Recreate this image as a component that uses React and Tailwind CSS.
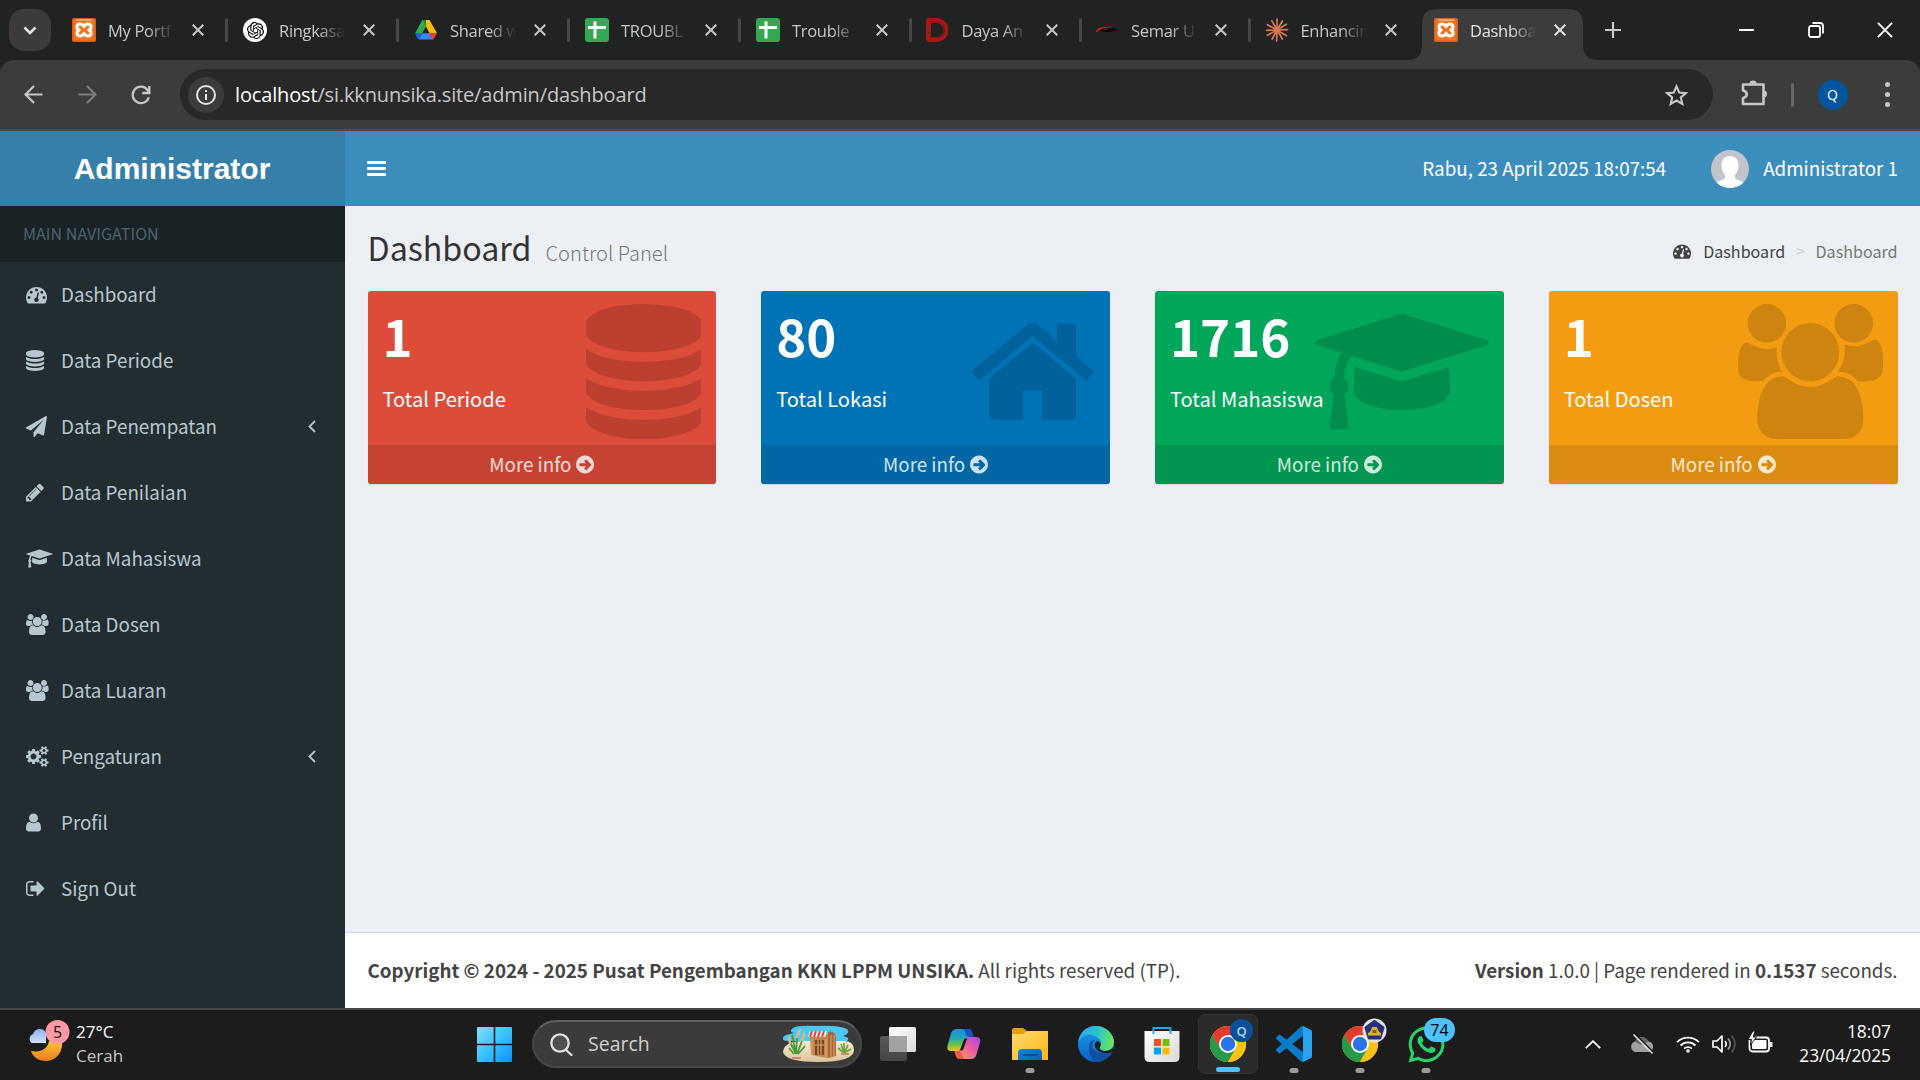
import React from "react";
import { SiOpenai } from "react-icons/si";
import { FaWhatsapp } from "react-icons/fa";

/* Font Awesome 4 outlines: [viewBox x, width, path] on a 1792-unit em */
const FA = {
  dashboard: [0, 1792, "M384 1152q0-53-37.5-90.5t-90.5-37.5-90.5 37.5-37.5 90.5 37.5 90.5 90.5 37.5 90.5-37.5 37.5-90.5zm192-448q0-53-37.5-90.5t-90.5-37.5-90.5 37.5-37.5 90.5 37.5 90.5 90.5 37.5 90.5-37.5 37.5-90.5zm428 481l101-382q6-26-7.5-48.5t-38.5-29.5-48 6.5-30 39.5l-101 382q-60 5-107 43.5t-63 98.5q-20 77 20 146t117 89 146-20 89-117q16-60-6-117t-72-91zm660-33q0-53-37.5-90.5t-90.5-37.5-90.5 37.5-37.5 90.5 37.5 90.5 90.5 37.5 90.5-37.5 37.5-90.5zm-640-640q0-53-37.5-90.5t-90.5-37.5-90.5 37.5-37.5 90.5 37.5 90.5 90.5 37.5 90.5-37.5 37.5-90.5zm448 192q0-53-37.5-90.5t-90.5-37.5-90.5 37.5-37.5 90.5 37.5 90.5 90.5 37.5 90.5-37.5 37.5-90.5zm320 448q0 261-141 483-19 29-54 29h-1402q-35 0-54-29-141-221-141-483 0-182 71-348t191-286 286-191 348-71 348 71 286 191 191 286 71 348z"],
  database: [128, 1536, "M896 768q237 0 443-43t325-127v170q0 69-103 128t-280 93.5-385 34.5-385-34.5-280-93.5-103-128v-170q119 84 325 127t443 43zm0 768q237 0 443-43t325-127v170q0 69-103 128t-280 93.5-385 34.5-385-34.5-280-93.5-103-128v-170q119 84 325 127t443 43zm0-384q237 0 443-43t325-127v170q0 69-103 128t-280 93.5-385 34.5-385-34.5-280-93.5-103-128v-170q119 84 325 127t443 43zm0-1152q208 0 385 34.5t280 93.5 103 128v128q0 69-103 128t-280 93.5-385 34.5-385-34.5-280-93.5-103-128v-128q0-69 103-128t280-93.5 385-34.5z"],
  send: [0, 1792, "M1764 11q33 24 27 64l-256 1536q-5 29-32 45-14 8-31 8-11 0-24-5l-453-185-242 295q-18 23-49 23-13 0-22-4-19-7-30.5-23.5t-11.5-36.5v-349l864-1059-1069 925-395-162q-37-14-40-55-2-40 32-59l1664-960q15-9 32-9 20 0 36 11z"],
  pencil: [128, 1536, "M491 1536l91-91-235-235-91 91v107h128v128h107zm523-928q0-22-22-22-10 0-17 7l-542 542q-7 7-7 17 0 22 22 22 10 0 17-7l542-542q7-7 7-17zm-54-192l416 416-832 832h-416v-416zm683 96q0 53-37 90l-166 166-416-416 166-165q36-38 90-38 53 0 91 38l235 234q37 39 37 91z"],
  cap: [0, 2304, "M1774 836l18 316q4 69-82 128t-235 93.5-323 34.5-323-34.5-235-93.5-82-128l18-316 574 181q22 7 48 7t48-7zm530-324q0 23-22 31l-1120 352q-4 1-10 1t-10-1l-652-206q-43 34-71 111.5t-34 178.5q63 36 63 109 0 69-58 107l58 433q2 14-8 25-9 11-24 11h-192q-15 0-24-11-10-11-8-25l58-433q-58-38-58-107 0-73 65-111 11-207 98-330l-333-104q-22-8-22-31t22-31l1120-352q4-1 10-1t10 1l1120 352q22 8 22 31z"],
  users: [-64, 1920, "M529 896q-162 5-265 128h-134q-82 0-138-40.5t-56-118.5q0-353 124-353 6 0 43.5 21t97.5 42.5 119 21.5q67 0 133-23-5 37-5 66 0 159 93 293zm1071 637q0 120-73 189.5t-194 69.5h-874q-121 0-194-69.5t-73-189.5q0-53 3.5-103.5t14-109 26.5-108.5 43-97.5 62-81 85.5-53.5 111.5-20q10 0 43 21.5t73 48 107 48 135 21.5 135-21.5 107-48 73-48 43-21.5q61 0 111.5 20t85.5 53.5 62 81 43 97.5 26.5 108.5 14 109 3.5 103.5zm-1024-1277q0 106-75 181t-181 75-181-75-75-181 75-181 181-75 181 75 75 181zm704 384q0 159-112.5 271.5t-271.5 112.5-271.5-112.5-112.5-271.5 112.5-271.5 271.5-112.5 271.5 112.5 112.5 271.5zm576 225q0 78-56 118.5t-138 40.5h-134q-103-123-265-128 93-134 93-293 0-29-5-66 66 23 133 23 59 0 119-21.5t97.5-42.5 43.5-21q124 0 124 353zm-128-609q0 106-75 181t-181 75-181-75-75-181 75-181 181-75 181 75 75 181z"],
  cogs: [-64, 1920, "M832 896q0-106-75-181t-181-75-181 75-75 181 75 181 181 75 181-75 75-181zm768 512q0-52-38-90t-90-38-90 38-38 90q0 53 37.5 90.5t90.5 37.5 90.5-37.5 37.5-90.5zm0-1024q0-52-38-90t-90-38-90 38-38 90q0 53 37.5 90.5t90.5 37.5 90.5-37.5 37.5-90.5zm-384 421v185q0 10-7 19.5t-16 10.5l-155 24q-11 35-32 76 34 48 90 115 7 11 7 20 0 12-7 19-23 30-82.5 89.5t-78.5 59.5q-11 0-21-7l-115-90q-37 19-77 31-11 108-23 155-7 24-30 24h-186q-11 0-20-7.5t-10-17.5l-23-153q-34-10-75-31l-118 89q-7 7-20 7-11 0-21-8-144-133-144-160 0-9 7-19 10-14 41-53t47-61q-23-44-35-82l-152-24q-10-1-17-9.5t-7-19.5v-185q0-10 7-19.5t16-10.5l155-24q11-35 32-76-34-48-90-115-7-11-7-20 0-12 7-20 22-30 82-89t79-59q11 0 21 7l115 90q34-18 77-32 11-108 23-154 7-24 30-24h186q11 0 20 7.5t10 17.5l23 153q34 10 75 31l118-89q8-7 20-7 11 0 21 8 144 133 144 160 0 8-7 19-12 16-42 54t-45 60q23 48 34 82l152 23q10 2 17 10.5t7 19.5zm640 533v140q0 16-149 31-12 27-30 52 51 113 51 138 0 4-4 7-122 71-124 71-8 0-46-47t-52-68q-20 2-30 2t-30-2q-14 21-52 68t-46 47q-2 0-124-71-4-3-4-7 0-25 51-138-18-25-30-52-149-15-149-31v-140q0-16 149-31 13-29 30-52-51-113-51-138 0-4 4-7 4-2 35-20t59-34 30-16q8 0 46 46.5t52 67.5q20-2 30-2t30 2q51-71 92-112l6-2q4 0 124 70 4 3 4 7 0 25-51 138 17 23 30 52 149 15 149 31zm0-1024v140q0 16-149 31-12 27-30 52 51 113 51 138 0 4-4 7-122 71-124 71-8 0-46-47t-52-68q-20 2-30 2t-30-2q-14 21-52 68t-46 47q-2 0-124-71-4-3-4-7 0-25 51-138-18-25-30-52-149-15-149-31v-140q0-16 149-31 13-29 30-52-51-113-51-138 0-4 4-7 4-2 35-20t59-34 30-16q8 0 46 46.5t52 67.5q20-2 30-2t30 2q51-71 92-112l6-2q4 0 124 70 4 3 4 7 0 25-51 138 17 23 30 52 149 15 149 31z"],
  user: [256, 1280, "M1536 1399q0 109-62.5 187t-150.5 78h-854q-88 0-150.5-78t-62.5-187q0-85 8.5-160.5t31.5-152 58.5-131 94-89 134.5-34.5q131 128 313 128t313-128q76 0 134.5 34.5t94 89 58.5 131 31.5 152 8.5 160.5zm-256-887q0 159-112.5 271.5t-271.5 112.5-271.5-112.5-112.5-271.5 112.5-271.5 271.5-112.5 271.5 112.5 112.5 271.5z"],
  signout: [64, 1664, "M704 1440q0 4 1 20t.5 26.5-3 23.5-10 19.5-20.5 6.5h-320q-119 0-203.5-84.5t-84.5-203.5v-704q0-119 84.5-203.5t203.5-84.5h320q13 0 22.5 9.5t9.5 22.5q0 4 1 20t.5 26.5-3 23.5-10 19.5-20.5 6.5h-320q-66 0-113 47t-47 113v704q0 66 47 113t113 47h312l11.5 1 11.5 3 8 5.5 7 9 2 13.5zm928-544q0 26-19 45l-544 544q-19 19-45 19t-45-19-19-45v-288h-448q-26 0-45-19t-19-45v-384q0-26 19-45t45-19h448v-288q0-26 19-45t45-19 45 19l544 544q19 19 19 45z"],
  home: [64, 1664, "M1472 992v480q0 26-19 45t-45 19h-384v-384h-256v384h-384q-26 0-45-19t-19-45v-480q0-1 .5-3t.5-3l575-474 575 474q1 2 1 6zm223-69l-62 74q-8 9-21 11h-3q-13 0-21-7l-692-577-692 577q-12 8-24 7-13-2-21-11l-62-74q-8-10-7-23.5t11-21.5l719-599q32-26 76-26t76 26l244 204v-195q0-14 9-23t23-9h192q14 0 23 9t9 23v408l219 182q10 8 11 21.5t-7 23.5z"],
  arrow: [128, 1536, "M1413 896q0-27-18-45l-91-91-271-271q-18-18-45-18t-45 18l-91 91q-18 18-18 45t18 45l126 126h-502q-26 0-45 19t-19 45v128q0 26 19 45t45 19h502l-126 126q-18 18-18 45t18 45l91 91q18 18 45 18t45-18l271-271 91-91q18-18 18-45zm251 0q0 209-103 385.5t-279.5 279.5-385.5 103-385.5-103-279.5-279.5-103-385.5 103-385.5 279.5-279.5 385.5-103 385.5 103 279.5 279.5 103 385.5z"],
};

function Fa({ name, size = 21, className = "" }) {
  const [x, w, d] = FA[name];
  return (
    <svg viewBox={`${x} 0 ${w} 1792`} width={(w * size) / 1792} height={size} className={"shrink-0 " + className} fill="currentColor">
      <path d={d} />
    </svg>
  );
}

const Xampp = () => (
  <svg viewBox="0 0 24 24" className="h-6 w-6" fill="none">
    <rect width="24" height="24" rx="2.500" fill="#f37321" />
    <rect x=".75" y=".75" width="22.500" height="22.500" rx="2" stroke="#d9601a" strokeWidth="1.500" />
    <path d="M4 2h16" stroke="#ffc69b" strokeWidth="1.200" />
    <path d="M12 8.800C10.500 5 5 5.200 5 9c0 1.500.8 2.500 2.200 3C5.800 12.500 5 13.500 5 15c0 3.800 5.500 4 7 .2 1.500 3.800 7 3.600 7-.2 0-1.500-.8-2.500-2.200-3 1.400-.5 2.200-1.500 2.200-3 0-3.800-5.500-4-7-.2Z" stroke="#fff" strokeWidth="3" strokeLinejoin="round" />
  </svg>
);
const Gpt = () => (
  <span className="grid h-6 w-6 place-items-center rounded-full bg-white text-black">
    <SiOpenai size={17} />
  </span>
);
const Drive = () => (
  <svg viewBox="0 0 24 24" className="h-6 w-6">
    <path d="M8.200 2h7.600L12 8.600 5.600 19.600 1.200 15.200Z" fill="#34a853" />
    <path d="M8.500 2h7L23 15.200h-7.400Z" fill="#fbbc04" />
    <path d="M8.500 2h3.500v6.400Z" fill="#188038" />
    <path d="M1 15.200h7.500L5 21.500q-1 0-1.500-1Z" fill="#1967d2" />
    <path d="M8.300 15.200h7.400L19 21.600H5Z" fill="#4285f4" />
    <path d="M15.500 15.200H23l-3 5.300q-.5 1-1.500 1Z" fill="#ea4335" />
  </svg>
);
const Sheets = () => (
  <svg viewBox="0 0 24 24" className="h-6 w-6">
    <rect width="24" height="24" rx="3" fill="#34a853" />
    <path d="M10 3.500v17M3 9.500h18" stroke="#fff" strokeWidth="3" />
  </svg>
);
const Daya = () => (
  <svg viewBox="0 0 24 24" className="h-6 w-6">
    <path d="M2.500 2.500h8a9.500 9.500 0 0 1 0 19h-8Z" fill="none" stroke="#9e1b16" strokeWidth="5" strokeLinejoin="round" />
    <path d="M3.500 4h7a8 8 0 0 1 0 16" fill="none" stroke="#7e1210" strokeWidth="1" />
  </svg>
);
const Semar = () => (
  <svg viewBox="0 0 24 24" className="h-6 w-6">
    <path d="M1 13.500C2 9 10 8 18 9.800 11 9.500 5 10.500 2.500 14Z" fill="#c8201c" />
    <path d="M4 13c4-3 13-4 20-1-5 0-8 2-12 2-3 0-5-1-8-1Z" fill="#050505" />
    <path d="M9 11.500h4" stroke="#50302f" strokeWidth=".8" />
  </svg>
);
const Claude = () => (
  <svg viewBox="-12 -12 24 24" className="h-6 w-6" stroke="#d97757" strokeWidth="1.700" strokeLinecap="round">
    {[0, 31, 58, 88, 121, 149, 182, 208, 241, 268, 299, 331].map((a, i) => (
      <path key={a} d={i % 2 ? "M0 0V-10.500" : "M0 0V-11"} transform={`rotate(${a})`} />
    ))}
    <circle r="3" fill="#d97757" stroke="none" />
  </svg>
);

const tabs = [
  ["My Portf", Xampp], ["Ringkasa", Gpt], ["Shared w", Drive], ["TROUBL", Sheets], ["Trouble", Sheets],
  ["Daya An", Daya], ["Semar U", Semar], ["Enhancin", Claude], ["Dashboa", Xampp],
];

const Cross = ({ s = 12, w = 2 }) => (
  <svg width={s} height={s} viewBox="0 0 12 12" fill="none" stroke="currentColor" strokeWidth={w}>
    <path d="M.7.7l10.600 10.600M11.300.7.7 11.300" />
  </svg>
);

function TabStrip() {
  return (
    <div className="flex h-[60px] items-center bg-[#202322] text-[#c7c7c7]">
      <div className="ml-[9px] mr-[9px] grid h-[42px] w-[42px] place-items-center rounded-[15px] bg-[#3b3b3b]">
        <svg width="14" height="9" viewBox="0 0 14 9" fill="none" stroke="#e3e3e3" strokeWidth="2.500"><path d="M1.500 1.500 7 7l5.500-5.500" /></svg>
      </div>
      {tabs.map(([t, Icon], i) => {
        const on = i === 8;
        return (
          <div key={i} className={"relative flex h-[60px] items-center " + (i < 4 ? "w-[171px]" : "w-[169.500px]")}>
            {on && (
              <svg className="absolute -left-[15px] top-[9px]" width="191" height="51" viewBox="0 0 191 51" fill="#3c3c3c">
                <path d="M0 51Q15 51 15 36V15Q15 0 30 0H161Q176 0 176 15V36Q176 51 191 51Z" />
              </svg>
            )}
            <div className="relative ml-3 flex items-center">
              <Icon />
              <span className={"ml-3 w-[72px] whitespace-nowrap pt-[2px] font-['Open_Sans',sans-serif] text-[16.500px] leading-6 tracking-[-0.300px] [mask-image:linear-gradient(to_right,#000_55%,transparent_92%)] " + (on ? "text-[#e3e3e3]" : "")}>{t}</span>
              <span className={"ml-[12px] " + (on ? "text-[#e3e3e3]" : "")}><Cross /></span>
              {i < 7 && <span className="ml-[21px] h-6 w-[3px] rounded-full bg-[#464847]" />}
            </div>
          </div>
        );
      })}
      <svg className="ml-[13px]" width="16" height="16" viewBox="0 0 16 16" stroke="#c7c7c7" strokeWidth="2.200"><path d="M8 0v16M0 8h16" /></svg>
      <div className="ml-auto flex text-white">
        <span className="grid h-[60px] w-[69px] place-items-center"><i className="h-[2px] w-[15px] bg-white" /></span>
        <span className="grid h-[60px] w-[69px] place-items-center">
          <svg width="16" height="16" viewBox="0 0 16 16" fill="none" stroke="#fff" strokeWidth="1.800"><rect x="1" y="4" width="11" height="11" rx="2" /><path d="M4.500 1H12q3 0 3 3v7.500" /></svg>
        </span>
        <span className="grid h-[60px] w-[70px] place-items-center"><Cross s={16} w={1.400} /></span>
      </div>
    </div>
  );
}

function Toolbar() {
  return (
    <div className="bg-[#202322]">
      <div className="flex h-[71px] items-center rounded-t-[14px] border-b-2 border-[#484b4a] bg-[#3c3c3c] text-[#c7c7c7]">
        <svg className="ml-6" width="19" height="19" viewBox="0 0 19 19" fill="none" stroke="currentColor" strokeWidth="2.200"><path d="M18.500 9.500H2M10 1 1.500 9.500 10 18" /></svg>
        <svg className="ml-[35px] text-[#7d7d7d]" width="19" height="19" viewBox="0 0 19 19" fill="none" stroke="currentColor" strokeWidth="2.200"><path d="M.5 9.500H17M9 1l8.500 8.500L9 18" /></svg>
        <svg className="ml-[34px]" width="20" height="20" viewBox="0 0 20 20" fill="none" stroke="currentColor" strokeWidth="2.300"><path d="M17.800 12.200A8.200 8.200 0 1 1 16.500 5l1.800 2.500M18.300 1v7h-7" /></svg>
        <div className="ml-[29px] flex h-[51px] w-[1533px] items-center rounded-full bg-[#282828]">
          <span className="ml-[8px] grid h-9 w-9 place-items-center rounded-full bg-[#3c3c3c]">
            <svg width="20" height="20" viewBox="0 0 20 20" fill="none" stroke="#e3e3e3" strokeWidth="2"><circle cx="10" cy="10" r="9" /><path d="M10 9v6M10 5v2" /></svg>
          </span>
          <span className="ml-[11px] whitespace-nowrap font-['Open_Sans',sans-serif] text-[20px] tracking-[-0.150px] text-[#c7c7c7]"><span className="text-white">localhost</span>/si.kknunsika.site/admin/dashboard</span>
          <svg className="ml-auto mr-[25px]" width="23" height="22" viewBox="0 0 24 23" fill="none" stroke="currentColor" strokeWidth="2.200"><path d="m12 2.500 2.800 6.400 7 .6-5.300 4.600 1.600 6.800-6.100-3.600-6.100 3.600 1.600-6.800-5.300-4.600 7-.6Z" /></svg>
        </div>
        <svg className="-mt-1 ml-[28px]" width="26" height="26" viewBox="0 0 26 26" fill="none" stroke="currentColor" strokeWidth="2.600"><path d="M2 4.500h20.500V24H2v-6c5-1 5-6.500 0-7.500Z" strokeLinejoin="round" /><path d="M8.500 3.500a3.500 3 0 0 1 7 0ZM23 10.500a3 3.500 0 0 1 0 7Z" fill="currentColor" stroke="none" /></svg>
        <i className="ml-6 h-6 w-[2.500px] rounded-full bg-[#666]" />
        <span className="ml-[24px] grid h-[30px] w-[30px] place-items-center rounded-full bg-[#00569e] font-['Open_Sans',sans-serif] text-[14px] text-white">Q</span>
        <span className="ml-[37px] flex flex-col gap-[5px]">{[0, 1, 2].map((k) => <i key={k} className="h-[5px] w-[5px] rounded-full bg-[#c7c7c7]" />)}</span>
      </div>
    </div>
  );
}

const nav = [
  ["Dashboard", "dashboard"], ["Data Periode", "database"], ["Data Penempatan", "send", true], ["Data Penilaian", "pencil"], ["Data Mahasiswa", "cap"],
  ["Data Dosen", "users"], ["Data Luaran", "users"], ["Pengaturan", "cogs", true], ["Profil", "user"], ["Sign Out", "signout"],
];

const cards = [
  ["1", "Total Periode", "database", "bg-[#dd4b39]"],
  ["80", "Total Lokasi", "home", "bg-[#0073b7]"],
  ["1716", "Total Mahasiswa", "cap", "bg-[#00a65a]"],
  ["1", "Total Dosen", "users", "bg-[#f39c12]"],
];

function Page() {
  return (
    <div className="flex h-[877px] font-['Noto_Sans_CJK_SC',sans-serif] text-[18.800px]">
      <aside className="w-[345px] shrink-0 bg-[#222d32] text-[#b8c7ce]">
        <div className="grid h-[75px] place-items-center bg-[#367fa9] pr-px font-['Liberation_Sans',sans-serif] text-[30px] font-bold text-white">Administrator</div>
        <div className="flex h-14 items-center bg-[#1a2226] pb-[2px] pl-[23px] text-[16.100px] text-[#4b646f]">MAIN NAVIGATION</div>
        {nav.map(([t, ic, sub]) => (
          <div key={t} className="flex h-[66px] items-center pb-px pl-[26px] pr-[29px]">
            <span className="w-[35px]"><Fa name={ic} /></span>
            <span className="pb-px">{t}</span>
            {sub && <svg className="ml-auto" width="8" height="13" viewBox="0 0 8 13" fill="none" stroke="currentColor" strokeWidth="1.800"><path d="M7 1 1.500 6.500 7 12" /></svg>}
          </div>
        ))}
      </aside>
      <main className="flex flex-1 flex-col bg-[#ecf0f5]">
        <header className="flex h-[75px] items-center bg-[#3c8dbc] px-[22px] text-white">
          <span className="flex flex-col gap-[3px]">{[0, 1, 2].map((k) => <i key={k} className="h-[3px] w-[19px] rounded-[1px] bg-white" />)}</span>
          <span className="ml-auto">Rabu, 23 April 2025 18:07:54</span>
          <svg className="ml-[45px] mr-[14px] rounded-full" width="38" height="38" viewBox="0 0 38 38">
            <rect width="38" height="38" fill="#c1c4ca" />
            <path d="M19 6c5.500 0 8.500 3.500 8.500 9 0 4-1.500 8-3.500 10v3c2 2.500 7 2.500 9 5v5H5v-5c2-2.500 7-2.500 9-5v-3c-2-2-3.500-6-3.500-10 0-5.500 3-9 8.500-9Z" fill="#fff" />
          </svg>
          <span>Administrator 1</span>
        </header>
        <div className="flex h-[85px] items-start px-[22.500px]">
          <h1 className="mt-[23px] text-[32.200px] leading-9 text-[#333]">Dashboard</h1>
          <span className="ml-[14px] mt-[29px] text-[20.100px] font-light leading-9 text-[#777]">Control Panel</span>
          <div className="ml-auto mt-[27px] flex items-center text-[16.100px] leading-9 text-[#444]">
            <Fa name="dashboard" size={18} />
            <span className="ml-[12px]">Dashboard</span>
            <span className="mx-[11px] text-[15px] text-[#ccc]">&gt;</span>
            <span className="text-[#777]">Dashboard</span>
          </div>
        </div>
        <div className="grid grid-cols-4 gap-[45px] px-[22.500px]">
          {cards.map(([n, l, ic, bg]) => (
            <div key={l} className={"relative flex h-[193px] flex-col overflow-hidden rounded-[3px] text-white shadow-[0_1px_1px_rgba(0,0,0,0.1)] " + bg}>
              <Fa name={ic} size={135} className="absolute right-[15px] top-[13px] text-black/15" />
              <div className="relative h-[154px] pl-[15px] pt-[16px]">
                <div className="text-[51px] font-bold leading-[57px]">{n}</div>
                <div className="mt-[19px] text-[20.100px] leading-[32px]">{l}</div>
              </div>
              <div className="relative flex h-[39px] items-center justify-center gap-[5px] bg-black/10 text-white/80">
                More info <Fa name="arrow" className="-mt-px" />
              </div>
            </div>
          ))}
        </div>
        <footer className="mt-auto flex h-[76px] items-center justify-between border-t border-[#d2d6de] bg-white px-[22.500px] text-[#444]">
          <span><b>Copyright © 2024 - 2025 Pusat Pengembangan KKN LPPM UNSIKA.</b> All rights reserved (TP).</span>
          <span><b>Version</b> 1.0.0 | Page rendered in <b>0.1537</b> seconds.</span>
        </footer>
      </main>
    </div>
  );
}

/* ---------- taskbar icons (36 x 36) ---------- */
const TaskView = () => (
  <svg width="36" height="36" viewBox="0 0 36 36">
    <defs><linearGradient id="tv" x1="0" y1="0" x2="0" y2="1"><stop stopColor="#5a5a5a" /><stop offset="1" stopColor="#454545" /></linearGradient><linearGradient id="tw" x1="0" y1="0" x2="1" y2="1"><stop stopColor="#fff" /><stop offset="1" stopColor="#dcdcdc" /></linearGradient></defs>
    <rect x="0" y="10" width="27" height="25" rx="2" fill="url(#tv)" />
    <rect x="9" y="1" width="27" height="25" rx="1.500" fill="url(#tw)" />
    <rect x="9" y="10" width="18" height="16" fill="#a2a2a2" />
  </svg>
);
const Copilot = () => (
  <svg width="36" height="36" viewBox="0 0 36 36">
    <defs>
      <linearGradient id="c1" x1="0" y1="0" x2="0" y2="1"><stop stopColor="#1a8fe8" /><stop offset=".4" stopColor="#1fa5b8" /><stop offset=".7" stopColor="#6cc04a" /><stop offset="1" stopColor="#f4c51c" /></linearGradient>
      <linearGradient id="c2" x1="1" y1="0" x2="0" y2="1"><stop stopColor="#a348e8" /><stop offset=".45" stopColor="#ee5a9c" /><stop offset="1" stopColor="#ffa45c" /></linearGradient>
    </defs>
    <path d="M11 3h11q3 0 4 3l1.500 5H24q-3 0-4 3l-3 8q-1 3-4 3H6Q0 25 1.500 19.500L5 7.500Q6.500 3 11 3Z" fill="url(#c1)" />
    <path d="M17 3h5q3 0 4 3l1.500 5h-3Q20 11 19.500 8 19 4 17 3Z" fill="#1553c4" />
    <path d="M25 33H14q-3 0-4-3l-1.500-5H12q3 0 4-3l3-8q1-3 4-3h7q5.500 0 4 5.500l-3.500 12Q29 33 25 33Z" fill="url(#c2)" />
    <path d="M18 33h-4q-3 0-4-3l-1.500-5H12q3 0 4 3t2 5Z" fill="#f4584a" />
    <path d="M18.800 12.500h3q-1 .8-1.400 2l-2.700 7.500q-.6 1.700-1.500 2.500h-3q1-.8 1.400-2l2.700-7.500q.6-1.700 1.500-2.500Z" fill="#1c1c1c" />
  </svg>
);
const Folder = () => (
  <svg width="36" height="36" viewBox="0 0 36 36">
    <defs><linearGradient id="fo" x1="0" y1="0" x2="1" y2="1"><stop stopColor="#ffd970" /><stop offset="1" stopColor="#fdb813" /></linearGradient><linearGradient id="fb" x1="0" y1="0" x2="1" y2="1"><stop stopColor="#1485d6" /><stop offset="1" stopColor="#0a62b4" /></linearGradient></defs>
    <path d="M0 4q0-2 2-2h9l4 3-4 4H0Z" fill="#e2a10a" />
    <path d="M0 8h11l4-3h21v29H0Z" fill="url(#fo)" />
    <path d="M6 34v-7q0-4 4-4h16q4 0 4 4v7Z" fill="url(#fb)" /><path d="M11 29h14" stroke="#0a4f94" strokeWidth="2" strokeLinecap="round" />
  </svg>
);
const Edge = () => (
  <svg width="36" height="36" viewBox="0 0 36 36">
    <defs>
      <linearGradient id="e1" x1="0" y1=".4" x2="1" y2=".6"><stop stopColor="#2aa6e8" /><stop offset=".5" stopColor="#2cc3d2" /><stop offset="1" stopColor="#6be84e" /></linearGradient>
      <linearGradient id="e2" x1="0" y1="0" x2="0" y2="1"><stop stopColor="#1c9be8" /><stop offset="1" stopColor="#0a63c8" /></linearGradient>
    </defs>
    <circle cx="18" cy="18" r="18" fill="url(#e2)" />
    <path d="M0 17C1 7 8 0 18 0s18 8 18 16c0 5-4 9-9 9-4 0-6-2-5-4 3-4 0-10-8-12C8 8 2 11 0 17Z" fill="url(#e1)" />
    <path d="M11 20c0-4 3-6 6-6-5 4-3 12 5 13 5 1 9-1 11-1-3 6-8 10-15 10-5-3-8-9-7-16Z" fill="#0f4fa0" />
    <path d="M22 21c-1 2 1 4 5 4 3 0 6-1 8-3l3 3-5 1.500c-3 .8-6 .8-9 0-6-1.500-9-7-6-11 3-1 6 2 4 5.500Z" fill="#1c1c1c" />
  </svg>
);
const Store = () => (
  <svg width="36" height="36" viewBox="0 0 36 36">
    <defs><linearGradient id="st" x1="0" y1="0" x2="1" y2="1"><stop stopColor="#fff" /><stop offset="1" stopColor="#d9d9d9" /></linearGradient></defs>
    <path d="M.5 5h35v26q0 5-5 5h-25q-5 0-5-5Z" fill="url(#st)" />
    <path d="M9.500 8V2h17v6" fill="none" stroke="#22a8e8" strokeWidth="2" />
    <path d="M10 13h7v7h-7Z" fill="#f25022" /><path d="M18.500 13h7v7h-7Z" fill="#7fba00" /><path d="M10 21.500h7v7h-7Z" fill="#00a4ef" /><path d="M18.500 21.500h7v7h-7Z" fill="#ffb900" />
  </svg>
);
const Chrome = () => (
  <svg width="36" height="36" viewBox="0 0 36 36">
    <circle cx="18" cy="18" r="18" fill="#fbc116" />
    <path d="M18 9H33.600A18 18 0 0 0 2.400 9L10.200 22.500Z" fill="#e33b2e" />
    <path d="M2.400 9A18 18 0 0 0 18 36L25.800 22.500 10.200 22.500Z" fill="#269a48" />
    <path d="M18 36A18 18 0 0 0 33.600 9H18l7.800 13.500Z" fill="#fbc116" />
    <circle cx="18" cy="18" r="9" fill="#fff" /><circle cx="18" cy="18" r="7.200" fill="#2b74e8" />
  </svg>
);
const VsCode = () => (
  <svg width="36" height="36" viewBox="0 0 24 24">
    <path d="M23.150 2.587L18.210.21a1.494 1.494 0 0 0-1.705.29l-9.460 8.630-4.120-3.128a.999.999 0 0 0-1.276.057L.327 7.261A1 1 0 0 0 .326 8.740L3.899 12 .326 15.260a1 1 0 0 0 .001 1.479L1.650 17.940a.999.999 0 0 0 1.276.057l4.120-3.128 9.460 8.630a1.492 1.492 0 0 0 1.704.29l4.942-2.377A1.500 1.500 0 0 0 24 20.060V3.939a1.500 1.500 0 0 0-.85-1.352zm-5.146 14.861L10.826 12l7.178-5.448v10.896z" fill="#0b7cc9" />
    <path d="M18 .15 23.150 2.587A1.500 1.500 0 0 1 24 3.940V20.060q0 1-.85 1.352L18 23.850Z" fill="#27a3f2" />
  </svg>
);
const Dot = ({ wide }) => <i className={"absolute bottom-[1px] left-1/2 h-[5px] -translate-x-1/2 rounded-full " + (wide ? "w-6 bg-[#4cc2ff]" : "w-[9px] bg-[#9a9a9a]")} />;

function Pinned({ children, dot, active, badge }) {
  return (
    <div className={"relative mr-[6px] grid h-[60px] w-[60px] place-items-center rounded-[7px] " + (active ? "border border-[#353535] bg-[#2a2a2a]" : "")}>
      {children}
      {badge}
      {dot && <Dot wide={active} />}
    </div>
  );
}

function Taskbar() {
  return (
    <div className="flex h-[72px] items-center border-t-2 border-[#474747] bg-[#1c1c1c] pb-[2px] font-['Open_Sans',sans-serif] text-[17.300px] leading-6 text-white">
      <svg className="-mt-[6px] ml-[27px]" width="43" height="44" viewBox="0 0 43 44">
        <defs><linearGradient id="mo" x1="0" y1="0" x2="0" y2="1"><stop stopColor="#f8c73c" /><stop offset="1" stopColor="#f07a1c" /></linearGradient><linearGradient id="cl" x1="0" y1="0" x2="0" y2="1"><stop stopColor="#8db4f4" /><stop offset="1" stopColor="#d2e0fa" /></linearGradient></defs>
        <path d="M4 32c10 2 17-3 18-10l13 1c1 10-6 19-16 19-8 0-13-4-15-10Z" fill="url(#mo)" />
        <path d="M5 24a5 5 0 0 1 1-9 7 7 0 0 1 13-1v10Z" fill="url(#cl)" />
        <circle cx="30.500" cy="13" r="12" fill="#ff99a4" />
        <text x="30.500" y="18.500" textAnchor="middle" fontSize="16" fill="#111">5</text>
      </svg>
      <div className="ml-[6px] w-[401px] text-[17px]"><div>27°C</div><div className="text-[#c4c4c4]">Cerah</div></div>
      <svg width="35" height="35" viewBox="0 0 35 35">
        <defs><linearGradient id="wi" x1="0" y1="0" x2="35" y2="35" gradientUnits="userSpaceOnUse"><stop stopColor="#7fe0fb" /><stop offset=".5" stopColor="#39c1fd" /><stop offset="1" stopColor="#0a93fc" /></linearGradient></defs>
        <path d="M1 0h15.700v16.700H0V1Q0 0 1 0ZM18.300 0H34q1 0 1 1v15.700H18.300ZM0 18.300h16.700V35H1q-1 0-1-1ZM18.300 18.300H35V34q0 1-1 1H18.300Z" fill="url(#wi)" />
      </svg>
      <div className="ml-5 mr-[18px] flex h-12 w-[330px] items-center rounded-full border-2 border-[#484848] border-t-[#606060] bg-[#3b3b3b]">
        <svg className="ml-4" width="23" height="23" viewBox="0 0 23 23" fill="#505050" stroke="#e0e0e0" strokeWidth="2.300" strokeLinecap="round"><circle cx="10" cy="10" r="8.700" /><path d="m16 17 5.500 5" /></svg>
        <span className="ml-[15px] text-[19.500px] text-[#d0d0d0]">Search</span>
        <svg className="ml-auto mr-[6px]" width="72" height="38" viewBox="0 0 72 38">
          <defs><linearGradient id="sa" x1="0" y1="0" x2="0" y2="1"><stop stopColor="#f7ecd8" /><stop offset="1" stopColor="#dcc39a" /></linearGradient></defs>
          <path d="M1 13q-1 3 5 3h59q3-3-1-4l-3-1q8-3 4-7Q55 0 35 1 15 0 11 3q-5 4 1 5L4 10q-3 1-3 3Z" fill="#4cc8f5" />
          <path d="M1 27Q2 16 22 16h40q10 0 10 9 0 12-36 12Q3 37 1 27Z" fill="url(#sa)" />
          <path d="M28 10h22l3 4v16l-8 3-16-3Z" fill="#c68649" /><path d="M46 7q7-2 8 6v18l-8 2Z" fill="#a8683a" /><path d="M49 10v22M52 10v21" stroke="#d9a266" />
          <path d="M33 15h9v15h-9Z" fill="#7a4523" /><path d="M33 20h9M36 15v15M39 15v15M30 14v16M44 14v18" stroke="#dca466" strokeWidth="1.200" />
          <path d="M28 6h17l-2 6H26Z" fill="#f4f0ec" /><path d="m30 6-2 6M34 6l-2 6M38 6l-2 6M42 6l-2 6" stroke="#e2403a" strokeWidth="2" />
          <path d="M14 29 7 15M14 29l-4-19M14 29l1-17M15 29l5-13M16 29l7-8M12 29l-5-6" stroke="#4c9a35" strokeWidth="1.800" /><path d="m15 12 3-7M20 15l2-6M8 18l-1-5" stroke="#e3b878" strokeWidth="2.500" strokeLinecap="round" />
          <path d="m62 28-6-5M62 28l-3-9M62 28v-10M62 28l4-8M62 28l7-4" stroke="#6aa83a" strokeWidth="1.700" /><path d="M10 33h9M59 29h8" stroke="#c98e68" strokeWidth="2" />
        </svg>
      </div>
      <div className="-ml-3 flex">
        <Pinned><TaskView /></Pinned>
        <Pinned><Copilot /></Pinned>
        <Pinned dot><Folder /></Pinned>
        <Pinned><Edge /></Pinned>
        <Pinned><Store /></Pinned>
        <Pinned dot active badge={<span className="absolute right-[4px] top-[4px] grid h-[23px] w-[23px] place-items-center rounded-full bg-[#08509a] text-[13px] font-semibold text-[#b9d6f2]">Q</span>}><Chrome /></Pinned>
        <Pinned dot><VsCode /></Pinned>
        <Pinned dot badge={
          <svg className="absolute right-[3px] top-[4px]" width="25" height="25" viewBox="0 0 25 25"><circle cx="12.500" cy="12.500" r="12" fill="#e4e2e4" /><path d="m12.500 3.500 8.500 6.200-3.200 10.300H7.200L4 9.700Z" fill="#26307c" stroke="#26307c" strokeLinejoin="round" strokeWidth="3" /><path d="M10 9h5q1 5 4 6v2.500H6V15q3-1 4-6Z" fill="#d9b520" /><path d="M10.500 12h4v3h-4Z" fill="#8a5c24" /></svg>
        }><Chrome /></Pinned>
        <Pinned dot badge={<span className="absolute right-[1px] top-[4px] grid h-6 w-[31px] place-items-center rounded-full bg-[#4cc2ff] text-[16px] leading-none text-black">74</span>}>
          <FaWhatsapp size={41} color="#25d366" />
        </Pinned>
      </div>
      <div className="ml-auto flex items-center">
        <svg width="16" height="9" viewBox="0 0 16 9" fill="none" stroke="#fff" strokeWidth="1.800"><path d="m.8 8.200 7.200-7 7.200 7" /></svg>
        <svg className="ml-[28px]" width="25" height="20" viewBox="0 0 25 20"><path d="M6 18a5.500 5.500 0 0 1 0-10.500 7.500 7.500 0 0 1 13.500 0A5.300 5.300 0 0 1 19.500 18Z" fill="#a0a0a0" /><path d="M6 7.500a7.500 7.500 0 0 1 13.500 0L12 11Z" fill="#666" /><path d="m5.500-.5 19 19" stroke="#1c1c1c" strokeWidth="1.600" /><path d="m4.500.5 19 19" stroke="#e6e6e6" strokeWidth="1.500" /></svg>
        <svg className="ml-[22px]" width="24" height="18" viewBox="0 0 24 18" fill="none" stroke="#fff" strokeWidth="1.800"><path d="M1 7.200a15.500 15.500 0 0 1 22 0M4.500 10.500a10.600 10.600 0 0 1 15 0M8 13.700a5.700 5.700 0 0 1 8 0" /><circle cx="12" cy="16" r="1.700" fill="#fff" stroke="none" /></svg>
        <svg className="ml-[12px]" width="25" height="20" viewBox="0 0 25 20" fill="none" stroke="#fff" strokeWidth="1.700"><path d="M1 7h4l5-5v16l-5-5H1Z" strokeLinejoin="round" /><path d="M13 7q2.500 3 0 6" /><path d="M16 4.500q4.500 5.500 0 11" stroke="#999" /><path d="M19.500 1.500q7 8.500 0 17" stroke="#555" /></svg>
        <svg className="-mt-1 ml-[11px]" width="25" height="23" viewBox="0 0 25 23"><rect x="1.500" y="6.500" width="19.500" height="14" rx="3" fill="none" stroke="#fff" strokeWidth="1.800" /><rect x="4" y="9" width="14.500" height="9" rx="1" fill="#fff" /><path d="M22 11h1.500q1 0 1 1v3q0 1-1 1H22Z" fill="#fff" /><path d="M5 0 0 8.500h3.500L2.500 14 8.500 6H5.200L7 0Z" fill="#fff" stroke="#1c1c1c" strokeWidth="1" /></svg>
        <div className="ml-[24px] mr-[29px] w-[94px] whitespace-nowrap text-right"><div>18:07</div><div>23/04/2025</div></div>
      </div>
    </div>
  );
}

export default function App() {
  return (
    <div className="flex h-[1080px] w-[1920px] flex-col overflow-hidden">
      <TabStrip />
      <Toolbar />
      <Page />
      <Taskbar />
    </div>
  );
}
